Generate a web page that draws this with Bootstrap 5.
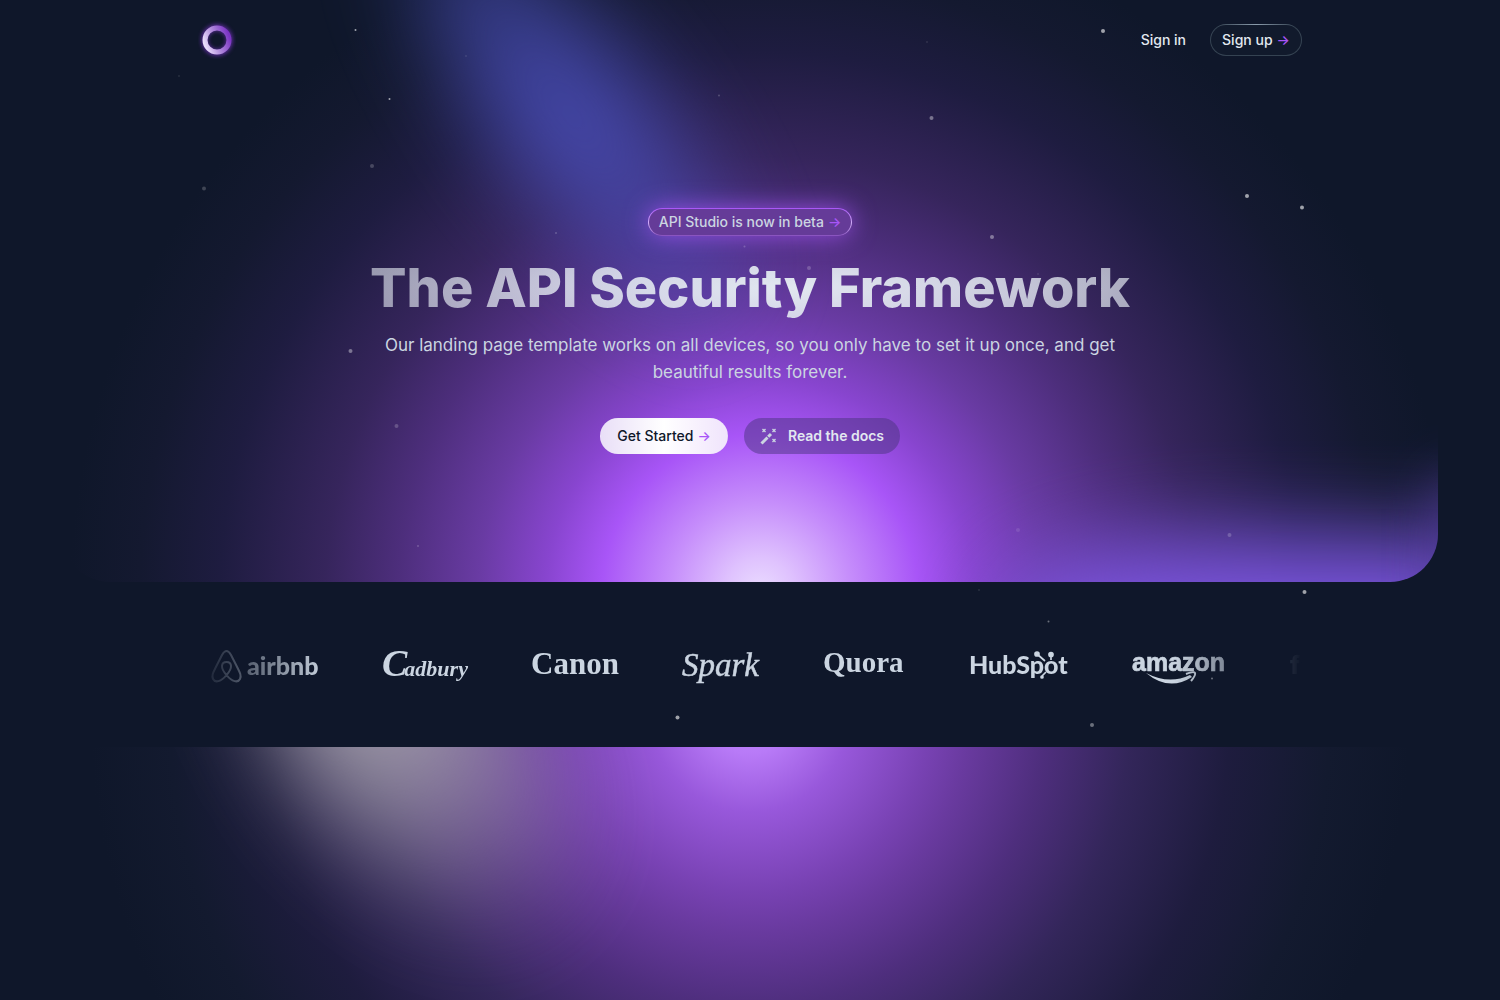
<!DOCTYPE html>
<html lang="en">
<head>
<meta charset="utf-8">
<meta name="viewport" content="width=device-width, initial-scale=1">
<title>The API Security Framework</title>
<link href="https://cdn.jsdelivr.net/npm/bootstrap@5.3.0/dist/css/bootstrap.min.css" rel="stylesheet">
<style>
body{background:#0f172a;color:#cbd5e1;font-family:Inter,"Liberation Sans",sans-serif;overflow-x:hidden}
.page-wrap{max-width:1152px;padding:0 24px}
.site-header{height:80px}
.nav-link-text{color:#e2e8f0;font-size:14px;line-height:20px;font-weight:500}
.arrow{color:#a855f7;font-weight:500}
.pill{font-size:14px;line-height:20px;font-weight:500;border-radius:999px;border:1px solid transparent;text-decoration:none;display:inline-flex;align-items:center;justify-content:center;gap:4px}
.pill-signup{color:#e2e8f0;padding:5px 11px;min-width:92px;background:linear-gradient(#111a2c,#111a2c) padding-box,radial-gradient(ellipse at 50% 0,#8b9cac,#354352 60%) border-box}
.pill-beta{color:#cbd5e1;padding:3px 10px;min-width:204px;margin-bottom:20px;background:linear-gradient(#653b98,#653b98) padding-box,linear-gradient(#a855f7,#d8b4fe 55%,#8751bd) border-box;box-shadow:0 0 24px rgba(168,85,247,.8)}
.pill-start,.pill-start:hover{color:#0f172a;width:128px;height:36px;background:linear-gradient(90deg,#e9dff7,#fff 50%,#f0e4fc)}
.pill-docs,.pill-docs:hover{color:#e2e8f0;width:156px;height:36px;gap:11px;font-weight:600;background:rgba(74,52,125,.5)}
.hero{position:relative;padding-top:128px;padding-bottom:128px}
.hero-copy{max-width:768px}
.hero h1{font-size:54px;line-height:64px;font-weight:800;margin:0 0 12px;color:transparent;background:radial-gradient(ellipse 54% 120% at 55% 50%,#e2e8f0 0%,rgba(226,232,240,.88) 45%,rgba(226,232,240,.62) 100%);background-clip:text;-webkit-background-clip:text}
.hero-text{font-size:17px;line-height:27px;margin-bottom:32px}
.hero-glow{position:absolute;inset:-80px 62px 0;overflow:hidden;border-radius:0 0 48px 48px;z-index:-1;
background:radial-gradient(circle 690px at 698px 592px,#eadcff 0,#dfc2fe 34px,#c68efb 90px,#a855f7 158px,#8845cf 214px,#693ba3 282px,#4d2e7c 362px,#36255c 435px,#1e1c40 540px,#141930 620px,#0f172a 690px)}
.beam{position:absolute;left:438px;top:-130px;width:150px;height:500px;border-radius:50%;background:linear-gradient(rgba(75,80,189,.55),#4b50bd 50%,rgba(75,80,189,.45));opacity:.85;filter:blur(46px);transform:rotate(-38deg)}
.corner{position:absolute;right:-40px;bottom:-110px;width:480px;height:155px;border-radius:50% 0 0 0;background:#8058e6;opacity:.95;filter:blur(44px)}
.corner-edge{position:absolute;right:-65px;bottom:-30px;width:70px;height:140px;background:#7650d3;opacity:.4;filter:blur(25px)}
.clients{height:165px}
.logo-track{gap:64px;padding:4px 0 4px 13px;overflow:hidden;-webkit-mask-image:linear-gradient(90deg,transparent,#000 128px,#000 calc(100% - 128px),transparent);mask-image:linear-gradient(90deg,transparent,#000 128px,#000 calc(100% - 128px),transparent)}
.logo-track svg{flex:none;fill:#cbd5e1;color:#cbd5e1;overflow:visible}
.features{position:relative;height:253px;overflow:hidden;background:radial-gradient(circle 660px at 50% -35px,#c58bff 0,#b87af7 42px,#9858db 100px,#7842b3 180px,#693a9f 220px,#4e2e7d 295px,#33265a 380px,#1e1c3e 480px,#131a2f 580px,#0f172a 660px)}
.features-beam{position:absolute;left:310px;top:-220px;width:210px;height:440px;border-radius:50%;background:linear-gradient(#b5b2b8 40%,rgba(181,178,184,.1) 95%);opacity:.85;filter:blur(50px);transform:rotate(-38deg)}
.stars{position:absolute;top:0;left:0;z-index:2;pointer-events:none}
</style>
<script src="https://cdn.jsdelivr.net/npm/bootstrap@5.3.0/dist/js/bootstrap.bundle.min.js"></script>
</head>
<body>
<header class="site-header position-relative">
  <nav class="page-wrap container-fluid h-100 d-flex align-items-center justify-content-between" aria-label="Main">
    <a href="#" aria-label="Home">
      <svg width="38" height="38" viewBox="0 0 38 38" class="d-block" aria-hidden="true">
        <defs><linearGradient id="ring" x1="0" y1=".7" x2="1" y2=".3"><stop stop-color="#e9dcfb"/><stop offset=".45" stop-color="#b08bdb"/><stop offset="1" stop-color="#7c35c4"/></linearGradient>
        <filter id="soft" x="-30%" y="-30%" width="160%" height="160%"><feGaussianBlur stdDeviation="2"/></filter></defs>
        <circle cx="19" cy="19" r="12.5" fill="none" stroke="#7e35cd" stroke-width="6" filter="url(#soft)" opacity=".75"/>
        <circle cx="19" cy="19" r="12" fill="none" stroke="url(#ring)" stroke-width="5"/>
      </svg>
    </a>
    <div class="d-flex align-items-center">
      <a href="#" class="nav-link-text text-decoration-none me-4">Sign in</a>
      <a href="#" class="pill pill-signup">Sign up <span class="arrow">→</span></a>
    </div>
  </nav>
</header>
<main>
  <section class="hero">
    <div class="hero-glow" aria-hidden="true"><div class="beam"></div><div class="corner"></div><div class="corner-edge"></div></div>
    <div class="hero-copy mx-auto text-center">
      <div class="d-flex justify-content-center"><a href="#" class="pill pill-beta">API Studio is now in beta <span class="arrow">→</span></a></div>
      <h1>The API Security Framework</h1>
      <p class="hero-text">Our landing page template works on all devices, so you only have to set it up once, and get beautiful results forever.</p>
      <div class="d-flex justify-content-center gap-3">
        <button type="button" class="pill pill-start">Get Started <span class="arrow">→</span></button>
        <button type="button" class="pill pill-docs">
          <svg width="17" height="17" viewBox="0 0 17 17" fill="none" stroke="#cbd5e1" aria-hidden="true"><path d="M1.5 15.5 7.500 9.500M8.200 8.800 11 6" stroke-width="3"/><path d="m2.500 1 3 3m0-3-3 3M12.500 1l3 3m0-3-3 3M12.500 11l3 3m0-3-3 3" stroke-width="1.300"/></svg>
          Read the docs
        </button>
      </div>
    </div>
  </section>
  <section class="clients d-flex align-items-center" aria-label="Clients">
    <div class="page-wrap container-fluid">
      <div class="logo-track d-flex">
        <svg width="107" height="40" viewBox="0 0 107 40"><path d="M15.500 30C9 23 10 17 15.500 17S22 23 15.500 30C10 37 4 38 2 34S2 28 11 10Q15.500 2 20 10C29 28 31 30 29 34S21 37 15.500 30Z" fill="none" stroke="currentColor" stroke-width="2"/><text x="36" y="30" font-family="Lato" font-weight="900" font-size="25">airbnb</text></svg>
        <svg width="85" height="40" viewBox="0 0 85 40"><text x="0" y="31" font-family="Liberation Serif" font-weight="700" font-style="italic" font-size="38">C<tspan font-size="22" dx="-3">adbury</tspan></text></svg>
        <svg width="87" height="40" viewBox="0 0 87 40"><text x="0" y="29" font-family="Liberation Serif" font-weight="700" font-size="31">Canon</text></svg>
        <svg width="78" height="40" viewBox="0 0 78 40"><text x="0" y="31" font-family="Liberation Serif" font-style="italic" font-size="33" stroke="currentColor" stroke-width=".5">Spark</text></svg>
        <svg width="82" height="40" viewBox="0 0 82 40"><text x="-1" y="27" font-family="Liberation Serif" font-weight="700" font-size="29">Quora</text></svg>
        <svg width="99" height="40" viewBox="0 0 99 40"><text x="-1" y="29" font-family="Lato" font-weight="900" font-size="25">HubSpot</text><g stroke="currentColor" stroke-width="1.700"><path d="m67 9 8 7M81 10v5M76 27l-4 4"/><circle cx="67" cy="9" r="2"/><circle cx="81" cy="9.500" r="2"/><circle cx="72" cy="32" r="1"/></g></svg>
        <svg width="94" height="40" viewBox="0 0 94 40"><text x="-1" y="26" font-family="Liberation Sans" font-weight="700" font-size="25" stroke="currentColor" stroke-width=".7">amazon</text><path d="M13 28q23 12 44 2l2 2Q36 47 13 28Z"/><path d="M53 29q8-3 9-1t-4 8" fill="none" stroke="currentColor" stroke-width="2"/></svg>
        <svg width="96" height="40" viewBox="0 0 96 40"><text x="-1" y="29" font-family="Inter" font-weight="800" font-size="25">facebook</text></svg>
      </div>
    </div>
  </section>
  <section class="features" aria-hidden="true"><div class="features-beam"></div></section>
</main>
<svg class="stars w-100" viewBox="0 0 1500 1000" fill="#fff" aria-hidden="true">
  <g opacity=".6"><circle cx="1103" cy="31" r="2"/><circle cx="1302" cy="207.500" r="2"/><circle cx="1247" cy="196" r="2"/><circle cx="1304.500" cy="592" r="2"/><circle cx="677.500" cy="717.500" r="2"/><circle cx="355.500" cy="30" r="1"/><circle cx="389.500" cy="99" r="1"/></g>
  <g opacity=".38"><circle cx="931.500" cy="118" r="2"/><circle cx="992" cy="237" r="2"/><circle cx="1092" cy="725" r="2"/><circle cx="1048.500" cy="621.500" r="1"/><circle cx="350.500" cy="351" r="2"/><circle cx="1212" cy="678.500" r="1"/></g>
  <g opacity=".2"><circle cx="372" cy="166" r="2"/><circle cx="204" cy="188.500" r="2"/><circle cx="396.500" cy="426" r="2"/><circle cx="1229.500" cy="535" r="2"/><circle cx="418" cy="546" r="1"/><circle cx="809" cy="268" r="2"/><circle cx="744.500" cy="246.500" r="1"/><circle cx="556" cy="233" r="1"/><circle cx="719" cy="95.500" r="1"/></g>
  <g opacity=".1"><circle cx="1018" cy="530" r="2"/><circle cx="466" cy="56" r="1"/><circle cx="979" cy="590" r="1"/><circle cx="179" cy="76" r="1"/><circle cx="927" cy="42" r="1"/><circle cx="1038" cy="274" r="1"/></g>
</svg>
</body>
</html>
